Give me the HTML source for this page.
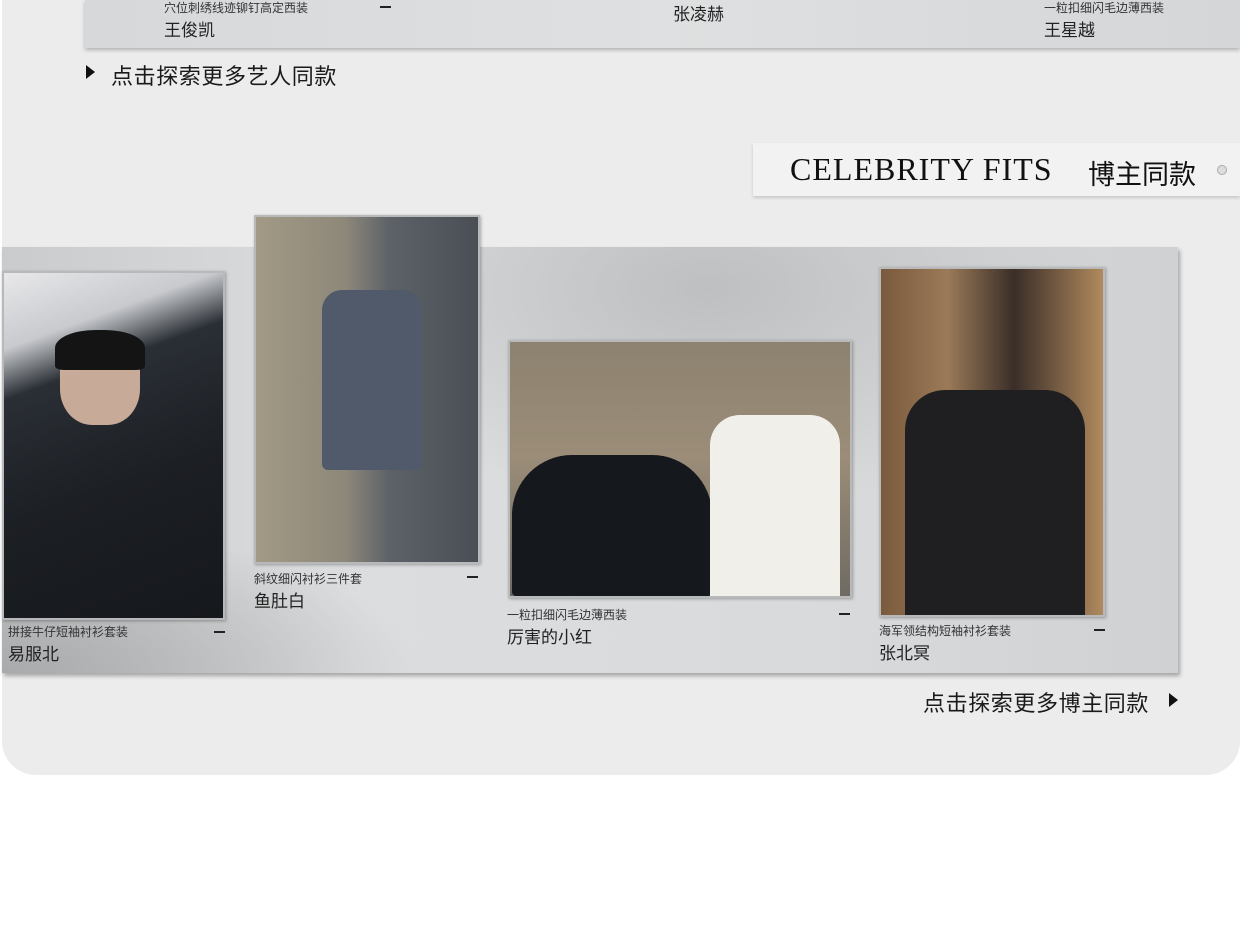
<!DOCTYPE html>
<html><head><meta charset="utf-8"><style>
*{margin:0;padding:0;box-sizing:border-box}
body{width:1240px;height:946px;background:#fff;position:relative;overflow:hidden;font-family:"Liberation Sans","Noto Sans CJK SC",sans-serif;color:#1a1a1a}
.bg{position:absolute;left:2px;top:0;width:1238px;height:775px;background:#ececec;border-radius:0 0 34px 34px}
.abs{position:absolute}
.cap{position:absolute;font-size:12px;color:#333;white-space:nowrap}
.nm{position:absolute;font-size:17px;color:#222;white-space:nowrap}
.dash{position:absolute;width:11px;height:2px;background:#222}
.ph{position:absolute;border:2px solid #b8b9ba;box-shadow:1px 1px 3px rgba(0,0,0,.3)}
</style></head><body>
<div class="bg"></div>
<div class="abs" style="left:85px;top:0;width:1155px;height:48px;background:linear-gradient(90deg,#d6d8da,#dfe0e1 50%,#d4d6d8);box-shadow:0 2px 4px rgba(0,0,0,.25)"></div>
<div class="cap" style="left:164px;top:-1px">穴位刺绣线迹铆钉高定西装</div>
<div class="nm" style="left:164px;top:16px">王俊凯</div>
<div class="dash" style="left:380px;top:6px"></div>
<div class="nm" style="left:673px;top:0px">张凌赫</div>
<div class="cap" style="left:1044px;top:-1px">一粒扣细闪毛边薄西装</div>
<div class="nm" style="left:1044px;top:16px">王星越</div>
<div class="abs" style="left:86px;top:65px;width:0;height:0;border-left:9px solid #111;border-top:7px solid transparent;border-bottom:7px solid transparent"></div>
<div class="abs" style="left:111px;top:59px;font-size:22px;letter-spacing:0.6px">点击探索更多艺人同款</div>
<div class="abs" style="left:753px;top:143px;width:487px;height:53px;background:#f2f2f2;box-shadow:0 2px 3px rgba(0,0,0,.15)"></div>
<div class="abs" style="left:790px;top:151px;font-family:'Liberation Serif',serif;font-size:32px;letter-spacing:1px;color:#111">CELEBRITY FITS</div>
<div class="abs" style="left:1088px;top:153px;font-size:27px;color:#111">博主同款</div>
<div class="abs" style="left:1217px;top:165px;width:10px;height:10px;border-radius:50%;background:#ddd;border:1px solid #aaa"></div>
<div class="abs" style="left:2px;top:247px;width:1176px;height:426px;background:radial-gradient(ellipse at 60% 10%,#bdbfc1,transparent 40%),radial-gradient(ellipse at 0% 100%,#a9aaab,transparent 25%),linear-gradient(90deg,#c9cbcd,#dcdddf 30%,#d8dadb 70%,#cfd1d3);box-shadow:2px 3px 4px rgba(0,0,0,.3)"></div>
<div class="ph" style="left:2px;top:271px;width:223px;height:349px;background:linear-gradient(160deg,#e8e8ea 0%,#c8cace 18%,#2a2f35 30%,#1c1f24 60%,#15181c)"></div>
<div class="abs" style="left:60px;top:335px;width:80px;height:90px;border-radius:40%;background:#d9b8a4;opacity:.9"></div>
<div class="abs" style="left:55px;top:330px;width:90px;height:40px;border-radius:45% 45% 10% 10%;background:#141414"></div>
<div class="ph" style="left:254px;top:215px;width:226px;height:349px;background:linear-gradient(90deg,#a29a85,#8e887a 40%,#5d6268 60%,#4a4e55)"></div>
<div class="abs" style="left:322px;top:290px;width:100px;height:180px;background:#505a6a;border-radius:20px 20px 6px 6px"></div>
<div class="ph" style="left:508px;top:340px;width:344px;height:258px;background:linear-gradient(180deg,#8d8270,#9b8d78 45%,#6f6a62)"></div>
<div class="abs" style="left:512px;top:455px;width:200px;height:141px;background:#15181d;border-radius:60px 60px 4px 4px"></div>
<div class="abs" style="left:710px;top:415px;width:130px;height:181px;background:#f1efea;border-radius:30px 30px 0 0"></div>
<div class="ph" style="left:879px;top:267px;width:226px;height:350px;background:linear-gradient(90deg,#7a5a3c,#9a7a58 30%,#3a2e28 60%,#b08a5e)"></div>
<div class="abs" style="left:905px;top:390px;width:180px;height:225px;background:#1f1f21;border-radius:40px 40px 0 0"></div>
<div class="cap" style="left:8px;top:623px">拼接牛仔短袖衬衫套装</div>
<div class="nm" style="left:8px;top:640px">易服北</div>
<div class="dash" style="left:214px;top:631px"></div>
<div class="cap" style="left:254px;top:570px">斜纹细闪衬衫三件套</div>
<div class="nm" style="left:254px;top:587px">鱼肚白</div>
<div class="dash" style="left:467px;top:576px"></div>
<div class="cap" style="left:507px;top:606px">一粒扣细闪毛边薄西装</div>
<div class="nm" style="left:507px;top:623px">厉害的小红</div>
<div class="dash" style="left:839px;top:613px"></div>
<div class="cap" style="left:879px;top:622px">海军领结构短袖衬衫套装</div>
<div class="nm" style="left:879px;top:639px">张北冥</div>
<div class="dash" style="left:1094px;top:629px"></div>
<div class="abs" style="left:923px;top:686px;font-size:22px;letter-spacing:0.6px">点击探索更多博主同款</div>
<div class="abs" style="left:1169px;top:693px;width:0;height:0;border-left:9px solid #111;border-top:7px solid transparent;border-bottom:7px solid transparent"></div>
</body></html>
